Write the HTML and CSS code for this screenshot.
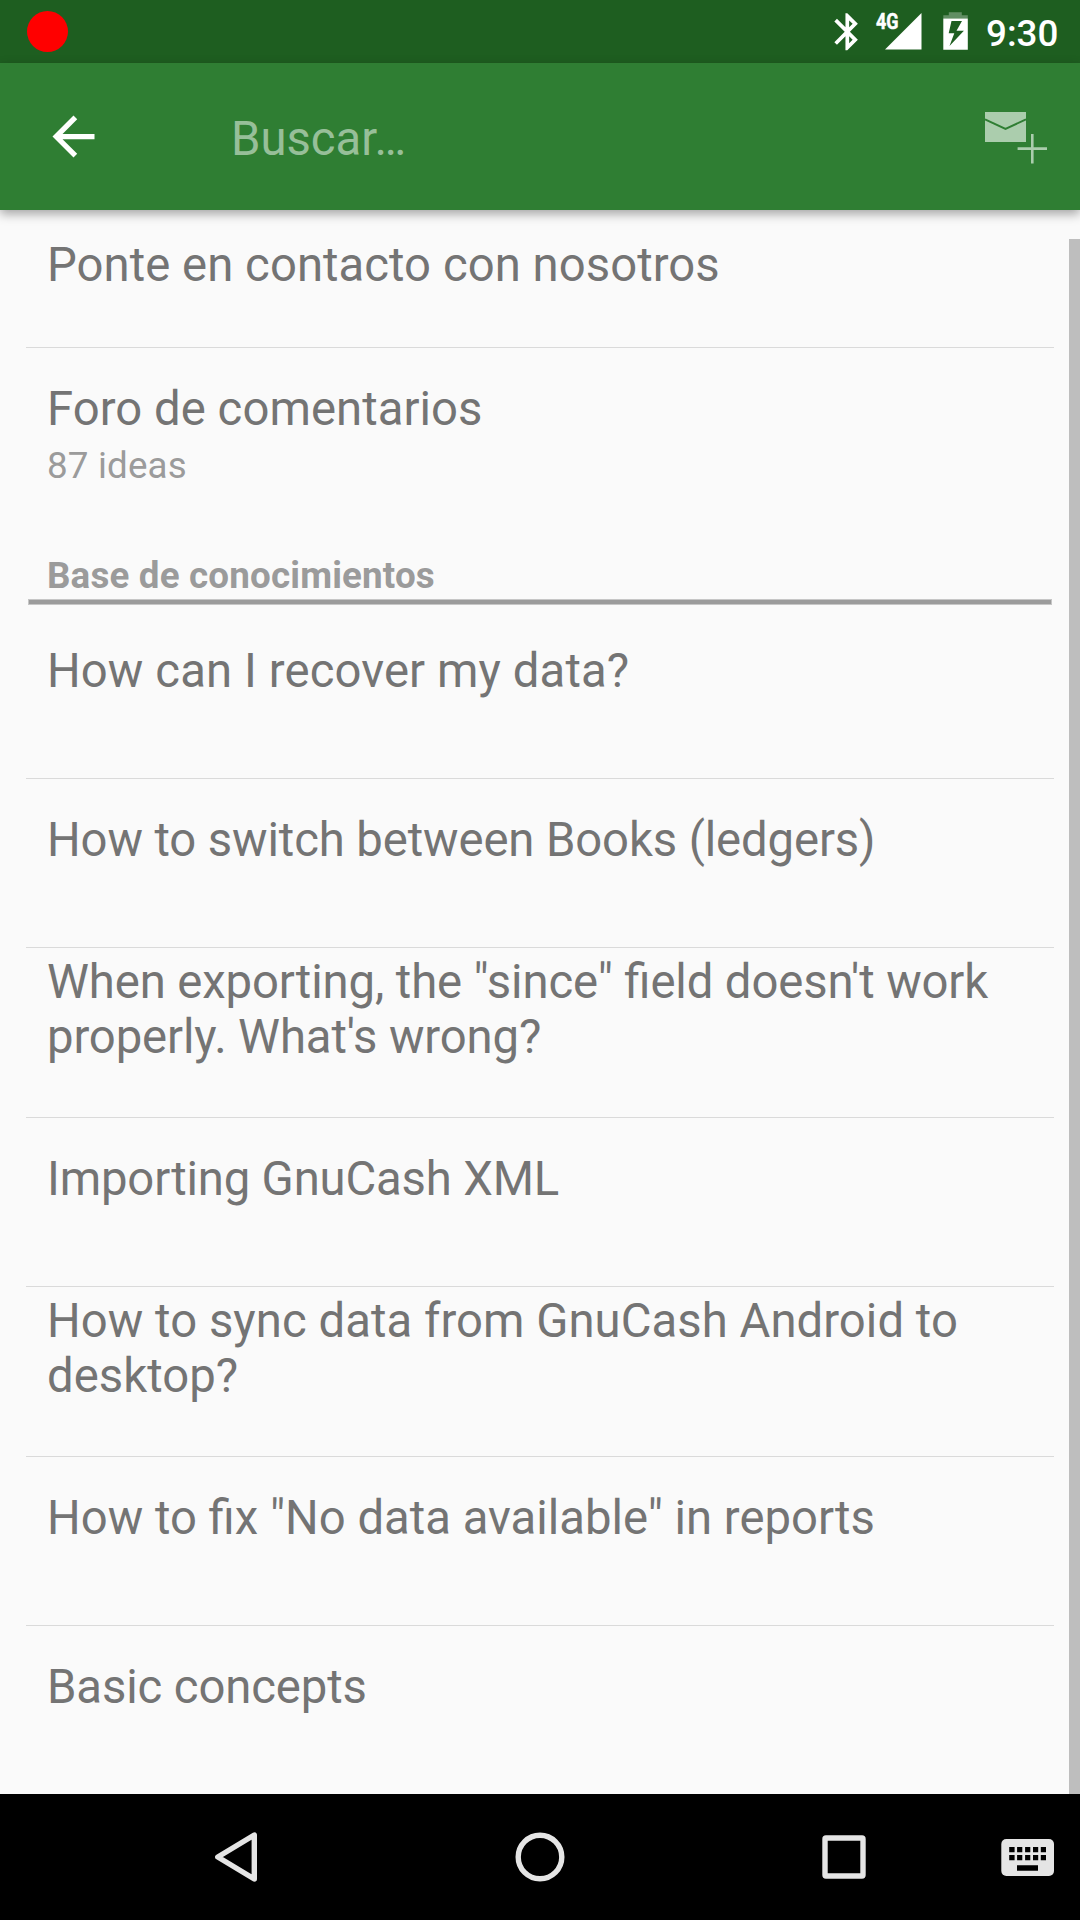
FILE: index.html
```html
<!DOCTYPE html>
<html lang="es">
<head>
<meta charset="utf-8">
<title>Contacto</title>
<link rel="stylesheet" href="styles.css">
</head>
<body>
<div class="screen">
  <div class="status-bar">
    <span class="record-dot"></span>
    <svg class="status-icons" width="160" height="63" viewBox="820 0 160 63">
      <path fill="#fff" transform="translate(825.1 9.6) scale(1.85)" d="M17.71 7.71L12 2h-1v7.59L6.41 5 5 6.41 10.59 12 5 17.59 6.41 19 11 14.41V22h1l5.71-5.71-4.3-4.29 4.3-4.29zM13 5.83l1.88 1.88L13 9.59V5.83zm1.88 10.46L13 18.17v-3.76l1.88 1.88z"/>
      <path fill="#fff" d="M921.5 13v36.5H885z"/>
      <text class="network-label" x="876" y="29" textLength="22.5" lengthAdjust="spacingAndGlyphs">4G</text>
      <path fill="#fff" fill-opacity=".3" d="M943.3 18.5v-3.3h5.5v-3h13v3h6v3.3z"/>
      <path fill="#fff" fill-rule="evenodd" d="M943.3 18.5h24.5v31.3h-24.5zM951.5 21l-2.8 12.2h5.6l-4.8 12.8 14.4-15.3h-7.4l5.5-9.7z"/>
    </svg>
    <span class="clock">9:30</span>
  </div>
  <header class="app-bar">
    <svg class="back" width="63" height="63" viewBox="0 0 24 24"><path fill="#fff" d="M20 11H7.83l5.59-5.59L12 4l-8 8 8 8 1.41-1.41L7.83 13H20v-2z"/></svg>
    <span class="search">Buscar…</span>
    <svg class="compose" width="64" height="54" viewBox="984 111 64 54">
      <path fill="#abcdad" d="M985 112h41v30h-41z"/>
      <path fill="none" stroke="#2f7e33" stroke-width="2" d="M985 119.3l20.5 9.6 20.5-9.6"/>
      <path fill="#abcdad" d="M1031 134h2.6v29.5h-2.6zM1017.6 147.3h29.4v2.8h-29.4z"/>
    </svg>
  </header>
  <main class="content">
    <div class="list">
      <div class="row contact"><p class="title wide">Ponte en contacto con nosotros</p></div>
      <div class="row forum"><p class="title wide">Foro de comentarios</p><p class="detail">87 ideas</p></div>
      <h2 class="section">Base de conocimientos</h2>
      <div class="row first"><p class="title wider">How can I recover my data?</p></div>
      <div class="row"><p class="title tight">How to switch between Books (ledgers)</p></div>
      <div class="row double"><p class="title tight">When exporting, the "since" field doesn't work<br>properly. What's wrong?</p></div>
      <div class="row"><p class="title tighter">Importing GnuCash XML</p></div>
      <div class="row double"><p class="title wide">How to sync data from GnuCash Android to<br>desktop?</p></div>
      <div class="row"><p class="title">How to fix "No data available" in reports</p></div>
      <div class="row last"><p class="title tight">Basic concepts</p></div>
    </div>
    <div class="scrollbar"></div>
  </main>
  <nav class="nav-bar">
    <svg width="1080" height="126" viewBox="0 1794 1080 126">
      <g fill="none" stroke="#e5e5e5" stroke-width="5.4" stroke-linejoin="round">
        <path d="M254.3 1835v44l-36.5-22z"/>
        <circle cx="540" cy="1857" r="21.8"/>
        <rect x="825" y="1838" width="38" height="38" rx="1"/>
      </g>
      <rect x="1001.3" y="1839" width="52.7" height="37" rx="5" fill="#e5e5e5"/>
      <path fill="#000" d="M1009.2 1847h5.4v5.2h-5.4zM1017.1 1847h5.2v5.2h-5.2zM1025.1 1847h5.2v5.2h-5.2zM1033 1847h5.2v5.2h-5.2zM1040.8 1847h5.2v5.2h-5.2zM1009.2 1855h5.4v5.2h-5.4zM1017.1 1855h5.2v5.2h-5.2zM1025.1 1855h5.2v5.2h-5.2zM1033 1855h5.2v5.2h-5.2zM1040.8 1855h5.2v5.2h-5.2zM1017 1865.2h21v5.6h-21z"/>
    </svg>
  </nav>
</div>
</body>
</html>
```
FILE: styles.css
```css
* { box-sizing: border-box; }
body { margin: 0; font-family: Roboto, sans-serif; background: #fafafa; }
p, h2 { margin: 0; }
svg { display: block; flex: none; }

.screen { width: 1080px; height: 1920px; display: flex; flex-direction: column; overflow: hidden; }

.status-bar { height: 63px; flex: none; display: flex; align-items: center; background: #1e5e20; padding-left: 27px; }
.record-dot { width: 41px; height: 41px; border-radius: 50%; background: #f00; margin-right: auto; }
.network-label { font: 700 22px Roboto, sans-serif; fill: #fff; stroke: #fff; stroke-width: .5px; }
.clock { width: 100px; padding: 3px 0 0 6px; font-size: 36.75px; line-height: 43px; font-weight: 500; color: #fff; }

.app-bar { height: 147px; flex: none; display: flex; align-items: center; padding: 0 32px 0 42px; background: #2f7e33; box-shadow: 0 4px 10px rgba(0, 0, 0, .35); z-index: 1; }
.search { margin-left: 126px; padding-top: 4px; font-size: 47.25px; line-height: 56px; color: #97bf99; }
.compose { margin: 3px 0 0 auto; }

.content { height: 1584px; flex: none; display: flex; justify-content: space-between; }
.list { width: 1028px; margin-left: 26px; }
.row { height: 169px; padding: 34px 0 0 21px; border-bottom: 1px solid #dadada; overflow: hidden; }
.title { font-size: 47.25px; line-height: 55px; color: #747474; white-space: nowrap; font-feature-settings: "liga" 1; }
.wide { letter-spacing: .05px; }
.wider { letter-spacing: .11px; }
.tight { letter-spacing: -.11px; }
.tighter { letter-spacing: -.16px; }
.contact { height: 138px; padding-top: 28px; }
.forum { height: 199px; border-bottom: 0; }
.detail { font-size: 36.75px; line-height: 43px; margin-top: 7px; letter-spacing: .16px; color: #9b9b9b; }
.section { height: 58px; margin: 0 2px; padding-top: 7px; font-size: 36.75px; line-height: 43px; letter-spacing: .17px; text-indent: 19px; color: #9b9b9b; }
.section::after { content: ""; display: block; height: 4px; margin-top: 2px; background: #9b9b9b; border: 1px solid #c6c6c6; }
.first { height: 174px; padding-top: 39px; }
.double { height: 170px; padding-top: 7px; }
.last { border-bottom: 0; }
.scrollbar { width: 11px; margin-top: 29px; background: #bebebe; }

.nav-bar { height: 126px; flex: none; background: #000; }
```
